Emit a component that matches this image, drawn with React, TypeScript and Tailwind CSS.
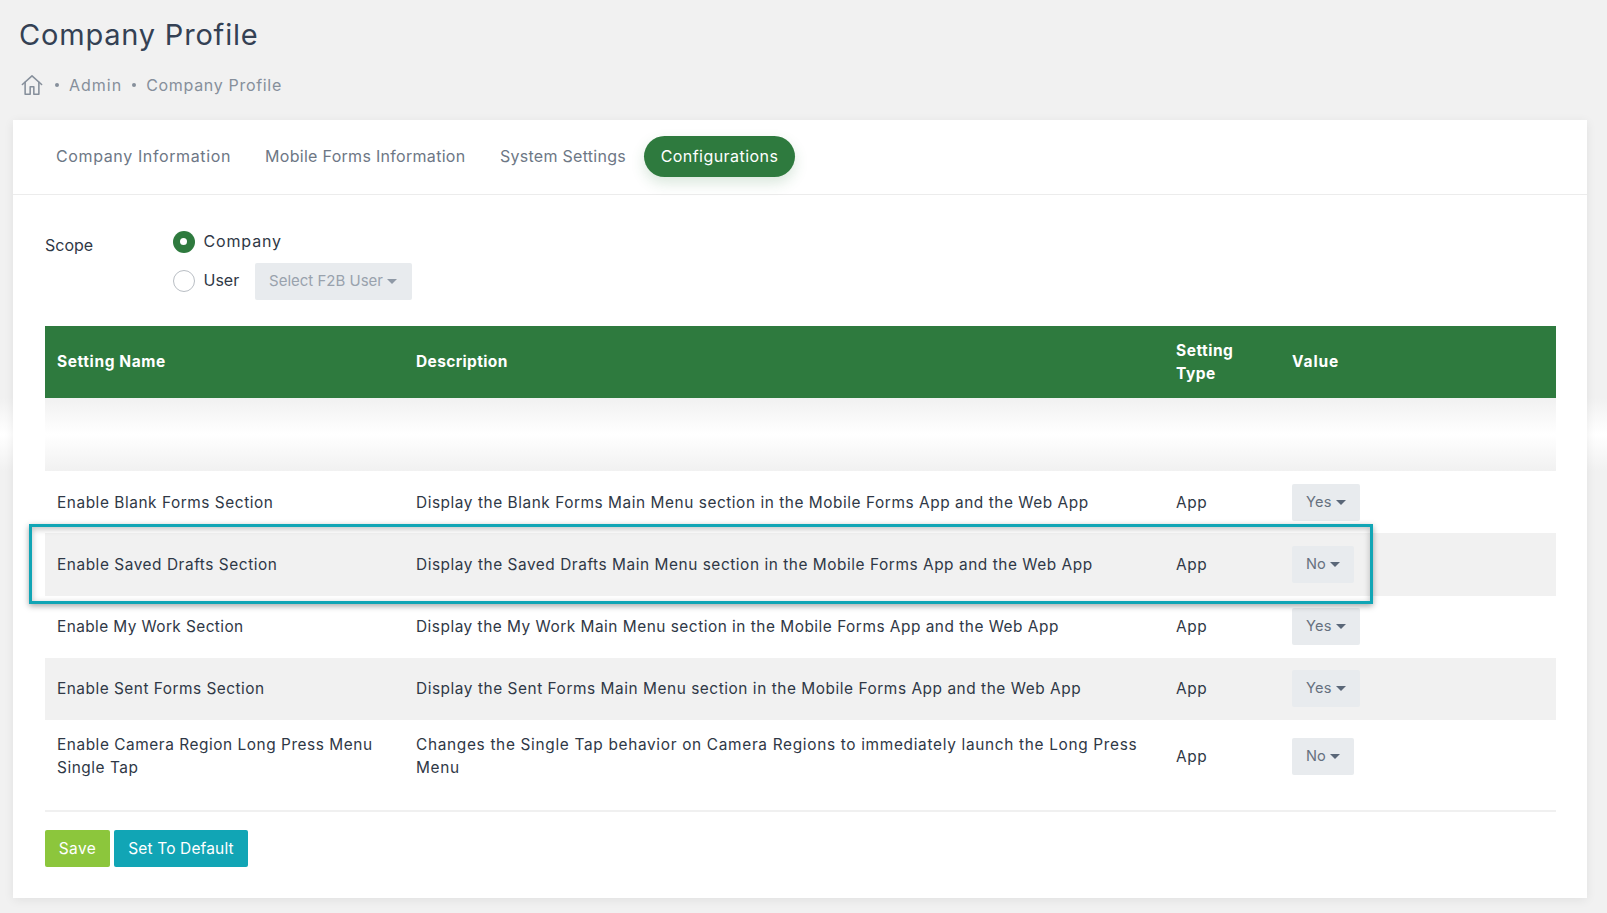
import React from "react";

const rows = [
  { name: "Enable Blank Forms Section", desc: "Display the Blank Forms Main Menu section in the Mobile Forms App and the Web App", val: "Yes", h: "h-[62px]", bg: "bg-white", pad: "", nt: "", dt: "" },
  { name: "Enable Saved Drafts Section", desc: "Display the Saved Drafts Main Menu section in the Mobile Forms App and the Web App", val: "No", h: "h-[63px]", bg: "bg-[#f1f1f1]", pad: "pb-[1px]", nt: "", dt: "" },
  { name: "Enable My Work Section", desc: "Display the My Work Main Menu section in the Mobile Forms App and the Web App", val: "Yes", h: "h-[62px]", bg: "bg-white", pad: "pb-[1px]", nt: "tracking-[0.41px]", dt: "tracking-[0.51px]" },
  { name: "Enable Sent Forms Section", desc: "Display the Sent Forms Main Menu section in the Mobile Forms App and the Web App", val: "Yes", h: "h-[62px]", bg: "bg-[#f1f1f1]", pad: "pb-[1px]", nt: "tracking-[0.5px]", dt: "" },
  { name: "Enable Camera Region Long Press Menu Single Tap", desc: "Changes the Single Tap behavior on Camera Regions to immediately launch the Long Press Menu", val: "No", h: "h-[90px]", bg: "bg-white", pad: "pb-[18px]", nt: "", dt: "tracking-[0.68px]" },
];

function Caret() {
  return <span className="ml-[4px] inline-block h-0 w-0 border-x-[5px] border-t-[5px] border-x-transparent border-t-[#5a6778]" />;
}

function ValueButton({ label }: { label: string }) {
  return (
    <span className={`inline-flex h-[37px] items-center rounded-[2px] bg-[#e8ebee] px-[14px] text-[14.6px] text-[#66717f] ${label === "Yes" ? "tracking-[0.2px]" : "tracking-normal"}`}>
      {label}
      <Caret />
    </span>
  );
}

export default function App() {
  return (
    <div className="relative h-[913px] overflow-hidden bg-[#f1f1f1] font-[Inter,sans-serif] text-[15.4px] text-[#2f3846]">
      <div className="absolute left-0 top-[398px] h-[73px] w-[13px] bg-gradient-to-b from-[#f1f1f1] via-white to-[#f1f1f1]" />
      <div className="absolute right-0 top-[398px] h-[73px] w-[20px] bg-gradient-to-b from-[#f1f1f1] via-white to-[#f1f1f1]" />

      <header className="h-[120px] pl-[19px] pt-[15px]">
        <h1 className="h-[40px] text-[29px] font-normal leading-[40px] tracking-[0.8px] text-[#344154]">Company Profile</h1>
        <nav className="mt-[18px] flex h-[24px] items-center text-[16px] text-[#868f9b]">
          <svg viewBox="0 0 24 24" className="ml-[2px] h-[22px] w-[22px]" fill="none" stroke="#868f9b" strokeWidth="1.7" strokeLinejoin="round" strokeLinecap="round">
            <path d="M1.5 11.5 12 2l10.5 9.5" />
            <path d="M4.5 9v13h5.5v-8h4v8h5.5V9" />
          </svg>
          <span className="ml-[12px] h-[4px] w-[4px] rounded-full bg-[#868f9b]" />
          <span className="ml-[10px] tracking-[1px]">Admin</span>
          <span className="ml-[10px] h-[4px] w-[4px] rounded-full bg-[#868f9b]" />
          <span className="ml-[10px] tracking-[0.68px]">Company Profile</span>
        </nav>
      </header>

      <main className="relative z-10 ml-[13px] mr-[20px] h-[778px] bg-white shadow-[0_2px_10px_rgba(0,0,0,0.07)]">
        <div className="flex h-[75px] items-start border-b border-[#ececec] pl-[43px] pt-[16px] text-[16px] text-[#6d7785]">
          <span className="flex h-[41px] w-[209px] items-center pb-[1px] tracking-[0.62px]">Company Information</span>
          <span className="flex h-[41px] w-[235px] items-center pb-[1px] tracking-[0.3px]">Mobile Forms Information</span>
          <span className="flex h-[41px] w-[144px] items-center pb-[1px] tracking-[0.27px]">System Settings</span>
          <span className="flex h-[41px] w-[151px] items-center justify-center rounded-[21px] bg-[#2e7a3e] pb-[1px] tracking-[0.44px] text-white shadow-[0_6px_14px_rgba(46,122,62,0.18)]">Configurations</span>
        </div>

        <section className="relative pl-[32px] pr-[31px] pt-[35px]">
          <div className="flex">
            <div className="w-[127.5px] pt-[3px] text-[16px]">Scope</div>
            <div>
              <div className="flex h-[23px] items-center">
                <span className="flex h-[22px] w-[22px] items-center justify-center rounded-full bg-[#2e7a3e]">
                  <span className="h-[7px] w-[7px] rounded-full bg-white" />
                </span>
                <span className="ml-[9px] pb-[1px] text-[16px] tracking-[0.85px]">Company</span>
              </div>
              <div className="mt-[10px] flex h-[37px] items-center">
                <span className="mb-[2px] h-[22px] w-[22px] rounded-full border border-[#b9bec4] bg-white" />
                <span className="ml-[9px] w-[51px] pb-[3px] text-[16px]">User</span>
                <span className="flex h-[37px] w-[157px] items-center justify-center rounded-[2px] bg-[#e8ebee] pb-[1px] text-[15px] text-[#99a2ad]">
                  Select F2B User
                  <span className="ml-[4px] inline-block h-0 w-0 border-x-[5px] border-t-[5px] border-x-transparent border-t-[#8f99a6]" />
                </span>
              </div>
            </div>
          </div>

          <div className="relative mt-[26px]">
            <table className="w-full table-fixed border-collapse text-left">
              <colgroup>
                <col className="w-[359px]" />
                <col className="w-[760px]" />
                <col className="w-[116px]" />
                <col />
              </colgroup>
              <thead>
                <tr className="h-[72px] bg-[#2e7a3e] text-[15.5px] font-bold leading-[23px] tracking-[0.5px] text-white">
                  <th className="px-[12px] pb-[1px] font-bold tracking-[0.6px]">Setting Name</th>
                  <th className="px-[12px] pb-[1px] font-bold tracking-[0.37px]">Description</th>
                  <th className="px-[12px] pb-[1px] font-bold">Setting<br />Type</th>
                  <th className="px-[12px] pb-[1px] font-bold tracking-[0.9px]">Value</th>
                </tr>
              </thead>
              <tbody className="leading-[23px] tracking-[0.55px]">
                <tr className="h-[73px]">
                  <td colSpan={4} className="bg-gradient-to-b from-[#f1f1f1] via-white to-[#f1f1f1]" />
                </tr>
                {rows.map((r) => (
                  <tr key={r.name} className={`${r.h} ${r.bg}`}>
                    <td className={`px-[12px] align-middle ${r.pad} ${r.nt}`}>{r.name}</td>
                    <td className={`px-[12px] align-middle ${r.pad} ${r.dt}`}>{r.desc}</td>
                    <td className={`px-[12px] align-middle ${r.pad}`}>App</td>
                    <td className={`px-[12px] align-middle ${r.pad}`}><ValueButton label={r.val} /></td>
                  </tr>
                ))}
              </tbody>
            </table>

            <div className="pointer-events-none absolute left-[-16px] top-[198px] h-[80px] w-[1344px] border-[3px] border-[#11a5b5] shadow-[0_2px_6px_rgba(0,0,0,0.35),inset_0_2px_6px_rgba(0,0,0,0.25)]" />

            <div className="flex gap-[4px] border-t-2 border-[#f0f0f0] pt-[18px] text-[15.5px] text-white">
              <button className="h-[37px] w-[65px] rounded-[2px] bg-[#8cc63c] tracking-[0.4px]">Save</button>
              <button className="h-[37px] w-[134px] rounded-[2px] bg-[#11a5b5] tracking-[0.15px]">Set To Default</button>
            </div>
          </div>
        </section>
      </main>
    </div>
  );
}
